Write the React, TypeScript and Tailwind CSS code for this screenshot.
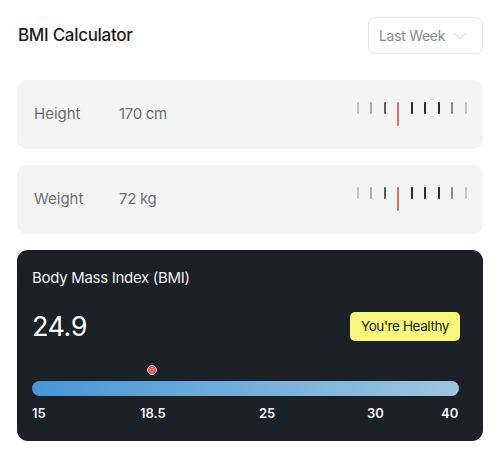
import { ChevronDown } from "lucide-react";

const ticks = [
  { c: "bg-[#c4c4c4]", m: "" },
  { c: "bg-[#adadad]", m: "ml-[11px]" },
  { c: "bg-[#5e5e5e]", m: "ml-[12px]" },
  { c: "red", m: "ml-[11px]" },
  { c: "bg-[#2a2a2a]", m: "ml-[12px]" },
  { c: "bg-[#2a2a2a]", m: "ml-[11px]" },
  { c: "bg-[#2a2a2a]", m: "ml-[12px]" },
  { c: "bg-[#8a8a8a]", m: "ml-[11px]" },
  { c: "bg-[#c4c4c4]", m: "ml-[12px]" },
];

function Ruler() {
  return (
    <div className="flex items-start">
      {ticks.map((t, i) =>
        t.c === "red" ? (
          <div key={i} className={`w-[2px] h-[24px] rounded-full bg-[#e06b6b] ${t.m}`} />
        ) : (
          <div key={i} className={`w-[2px] h-[12px] rounded-full ${t.c} ${t.m}`} />
        )
      )}
    </div>
  );
}

function MeasureCard({ label, value }: { label: string; value: string }) {
  return (
    <div className="h-[69px] rounded-[10px] bg-[#f4f4f4] flex items-center pl-[17px] pr-[16px]">
      <span className="w-[85px] text-[15px] text-[#707070]">{label}</span>
      <span className="text-[15px] text-[#707070] tracking-[-0.3px]">{value}</span>
      <div className="ml-auto self-start mt-[22px]">
        <Ruler />
      </div>
    </div>
  );
}

const scale = [
  { v: "15", w: "w-[108px]" },
  { v: "18.5", w: "w-[119px]" },
  { v: "25", w: "w-[108px]" },
  { v: "30", w: "w-[74px]" },
  { v: "40", w: "" },
];

export default function App() {
  return (
    <div className="w-[500px] h-[460px] bg-white px-[17px] pt-[17px] font-['Inter',sans-serif]">
      <div className="flex items-center justify-between">
        <h1 className="pl-[1px] text-[17px] font-medium text-[#1c1c1c] tracking-[-0.3px]">BMI Calculator</h1>
        <button className="h-[37px] w-[115px] border border-[#e6e6e6] rounded-[7px] flex items-center pl-[10px] pr-[12px] text-[14px] text-[#8a8a8a] tracking-[-0.3px]">
          Last Week
          <ChevronDown className="ml-auto w-[20px] h-[20px] text-[#cacaca]" strokeWidth={1.2} />
        </button>
      </div>

      <div className="mt-[26px] flex flex-col gap-[16px]">
        <MeasureCard label="Height" value="170 cm" />
        <MeasureCard label="Weight" value="72 kg" />
      </div>

      <div className="mt-[16px] h-[191px] rounded-[11px] bg-[#1c2128] px-[15px] pt-[17px] text-white">
        <div className="text-[15px] text-[#f0f0f0] tracking-[-0.3px]">Body Mass Index (BMI)</div>
        <div className="mt-[22px] flex items-center justify-between pr-[8px]">
          <span className="text-[27px] leading-none tracking-[-0.5px]">24.9</span>
          <span className="h-[29px] px-[11px] rounded-[5px] bg-[#f7f77e] text-[#1c1c1c] text-[13.5px] flex items-center tracking-[-0.4px]">
            You're Healthy
          </span>
        </div>
        <div className="mt-[24px] ml-[115px] w-[10px] h-[10px] rounded-full bg-[#e06565] border-[1.5px] border-[#f3d0d0]" />
        <div className="mt-[6px] mr-[9px] h-[15px] rounded-full bg-gradient-to-r from-[#4796d6] to-[#9cc5de]" />
        <div className="mt-[8px] flex text-[13px] font-semibold text-[#f4f4f4]">
          {scale.map((s) => (
            <span key={s.v} className={s.w}>{s.v}</span>
          ))}
        </div>
      </div>
    </div>
  );
}
